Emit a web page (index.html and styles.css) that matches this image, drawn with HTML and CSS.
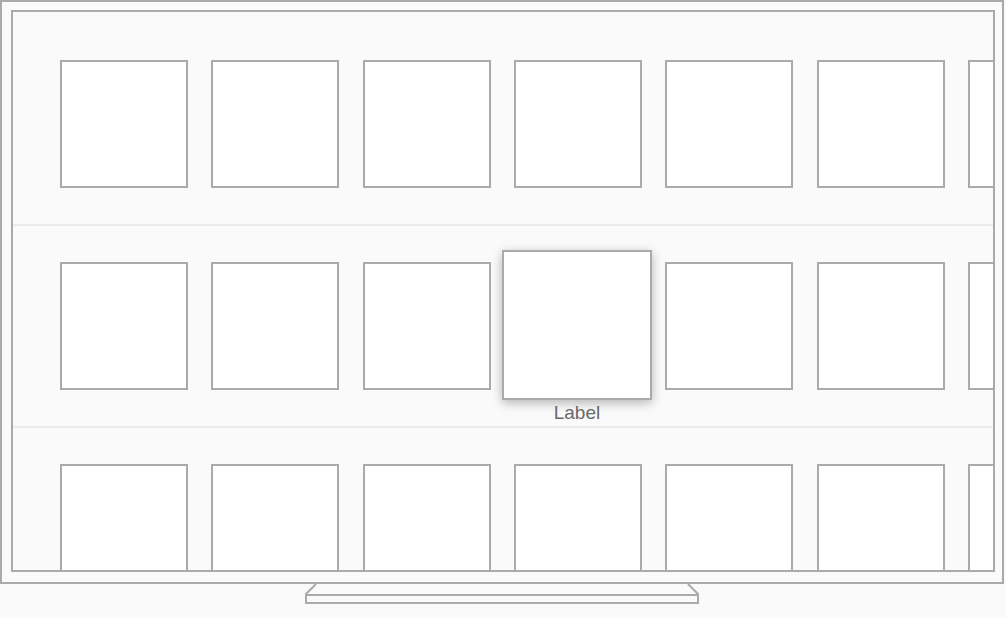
FILE: index.html
```html
<!DOCTYPE html>
<html>
<head>
<meta charset="utf-8">
<link rel="stylesheet" href="styles.css">
</head>
<body>
<div class="device">
  <div class="tv">
    <div class="screen">
      <div class="row">
        <div class="tile"></div><div class="tile"></div><div class="tile"></div><div class="tile"></div><div class="tile"></div><div class="tile"></div><div class="tile"></div>
      </div>
      <div class="row">
        <div class="tile"></div><div class="tile"></div><div class="tile"></div>
        <div class="tile focused"><span class="label">Label</span></div>
        <div class="tile"></div><div class="tile"></div><div class="tile"></div>
      </div>
      <div class="row last">
        <div class="tile"></div><div class="tile"></div><div class="tile"></div><div class="tile"></div><div class="tile"></div><div class="tile"></div><div class="tile"></div>
      </div>
    </div>
  </div>
  <div class="stand">
    <svg width="396" height="20" viewBox="0 0 396 20">
      <path d="M12 0 L2 10 L2 19 L394 19 L394 10 L384 0" fill="none" stroke="#aaaaaa" stroke-width="2"/>
      <path d="M2 11 L394 11" fill="none" stroke="#aaaaaa" stroke-width="2"/>
    </svg>
  </div>
</div>
</body>
</html>
```
FILE: styles.css
```css
* { box-sizing: border-box; }
html, body {
  margin: 0;
  padding: 0;
  background: #fafafa;
  font-family: "Liberation Sans", Arial, sans-serif;
}
.device {
  width: 1004px;
}
.tv {
  width: 1004px;
  height: 584px;
  border: 2px solid #aaaaaa;
  padding: 8px 7px 10px 9px;
}
.screen {
  width: 984px;
  height: 562px;
  border: 2px solid #aaaaaa;
  background: #fafafa;
  overflow: hidden;
  padding-top: 12px;
}
.row {
  display: flex;
  align-items: flex-start;
  gap: 23.33px;
  padding: 36px 0 36px 47px;
  border-bottom: 2px solid #ebebeb;
}
.row.last {
  border-bottom: none;
}
.tile {
  flex: 0 0 128px;
  width: 128px;
  height: 128px;
  background: #ffffff;
  border: 2px solid #aaaaaa;
}
.tile.focused {
  position: relative;
  flex: 0 0 150px;
  width: 150px;
  height: 150px;
  margin: -12px -10px -10px -12px;
  box-shadow: 0 3px 10px rgba(0, 0, 0, 0.28);
  z-index: 2;
}
.label {
  position: absolute;
  left: 50%;
  top: calc(100% + 5px);
  transform: translateX(-50%);
  font-size: 19px;
  line-height: 20px;
  color: #696969;
  white-space: nowrap;
}
.stand {
  display: flex;
  justify-content: center;
  height: 20px;
}
.stand svg {
  display: block;
}
```
